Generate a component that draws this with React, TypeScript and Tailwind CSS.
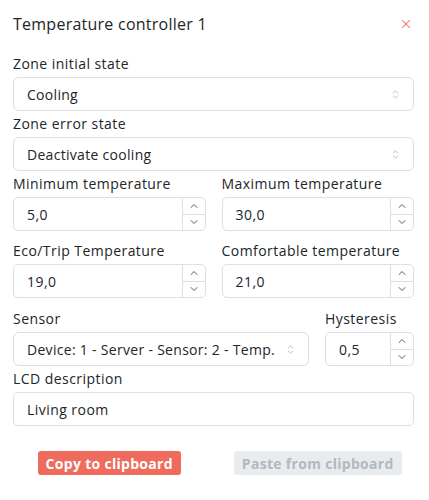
import { ChevronUp, ChevronDown, ChevronsUpDown, X } from "lucide-react";

function Label({ children, className = "" }: { children: React.ReactNode; className?: string }) {
  return (
    <div className={`h-[20px] text-[14px] leading-[20px] tracking-[0.45px] text-[#212529] ${className}`}>
      {children}
    </div>
  );
}

function Select({ value }: { value: string }) {
  return (
    <div className="flex h-[34px] items-center justify-between gap-[6px] rounded-[6px] border border-[#dcdfe3] pl-[13px] pr-[12px] text-[14px] tracking-[0.3px] text-[#212529]">
      <span className="truncate">{value}</span>
      <ChevronsUpDown className="h-[11px] w-[11px] shrink-0 text-[#9aa0a6]" strokeWidth={1.5} />
    </div>
  );
}

function NumberInput({ value }: { value: string }) {
  return (
    <div className="flex h-[34px] overflow-hidden rounded-[5px] border border-[#dcdfe3] text-[14px] tracking-[0.45px] text-[#212529]">
      <div className="flex flex-1 items-center pl-[13px]">{value}</div>
      <div className="flex w-[23px] flex-col border-l border-[#dcdfe3]">
        <div className="flex flex-1 items-center justify-center border-b border-[#dcdfe3]">
          <ChevronUp className="h-[12px] w-[12px] text-[#444]" strokeWidth={1.75} />
        </div>
        <div className="flex flex-1 items-center justify-center">
          <ChevronDown className="h-[12px] w-[12px] text-[#444]" strokeWidth={1.75} />
        </div>
      </div>
    </div>
  );
}

export default function App() {
  return (
    <div
      className="h-[500px] w-[429px] bg-white pl-[13px] pr-[15px] pt-[13px]"
      style={{ fontFamily: "'Open Sans', sans-serif" }}
    >
      <div className="flex h-[22px] items-center justify-between">
        <h1 className="text-[16px] leading-[22px] tracking-[0.25px] text-[#212529]">Temperature controller 1</h1>
        <X className="mr-[1px] h-[14px] w-[14px] text-[#ec6a5e]" strokeWidth={1.75} />
      </div>

      <Label className="mt-[19px]">Zone initial state</Label>
      <div className="mt-[3px]">
        <Select value="Cooling" />
      </div>

      <Label className="mt-[3px]">Zone error state</Label>
      <div className="mt-[3px]">
        <Select value="Deactivate cooling" />
      </div>

      <div className="mt-[3px] grid grid-cols-2 gap-x-[16px]">
        <div>
          <Label>Minimum temperature</Label>
          <div className="mt-[3px]">
            <NumberInput value="5,0" />
          </div>
        </div>
        <div>
          <Label>Maximum temperature</Label>
          <div className="mt-[3px]">
            <NumberInput value="30,0" />
          </div>
        </div>
      </div>

      <div className="mt-[10px] grid grid-cols-2 gap-x-[16px]">
        <div>
          <Label>Eco/Trip Temperature</Label>
          <div className="mt-[3px]">
            <NumberInput value="19,0" />
          </div>
        </div>
        <div>
          <Label>Comfortable temperature</Label>
          <div className="mt-[3px]">
            <NumberInput value="21,0" />
          </div>
        </div>
      </div>

      <div className="mt-[11px] flex gap-x-[16px]">
        <div className="flex-1">
          <Label>Sensor</Label>
          <div className="mt-[3px]">
            <Select value="Device: 1 - Server - Sensor: 2 - Temp." />
          </div>
        </div>
        <div className="w-[89px]">
          <Label>Hysteresis</Label>
          <div className="mt-[3px]">
            <NumberInput value="0,5" />
          </div>
        </div>
      </div>

      <Label className="mt-[3px]">LCD description</Label>
      <div className="mt-[3px] flex h-[34px] items-center rounded-[5px] border border-[#dcdfe3] pl-[13px] text-[14px] tracking-[0.45px] text-[#212529]">
        Living room
      </div>

      <div className="mt-[25px] grid grid-cols-2 gap-x-[16px]">
        <div className="flex justify-center">
          <button className="h-[24px] rounded-[3px] bg-[#ee6b5d] px-[8px] text-[14px] font-bold tracking-[0.3px] text-white">
            Copy to clipboard
          </button>
        </div>
        <div className="flex justify-center">
          <button className="h-[24px] rounded-[3px] bg-[#e9ecef] px-[8px] text-[14px] font-bold tracking-[0.3px] text-[#b3b8bd]">
            Paste from clipboard
          </button>
        </div>
      </div>
    </div>
  );
}
